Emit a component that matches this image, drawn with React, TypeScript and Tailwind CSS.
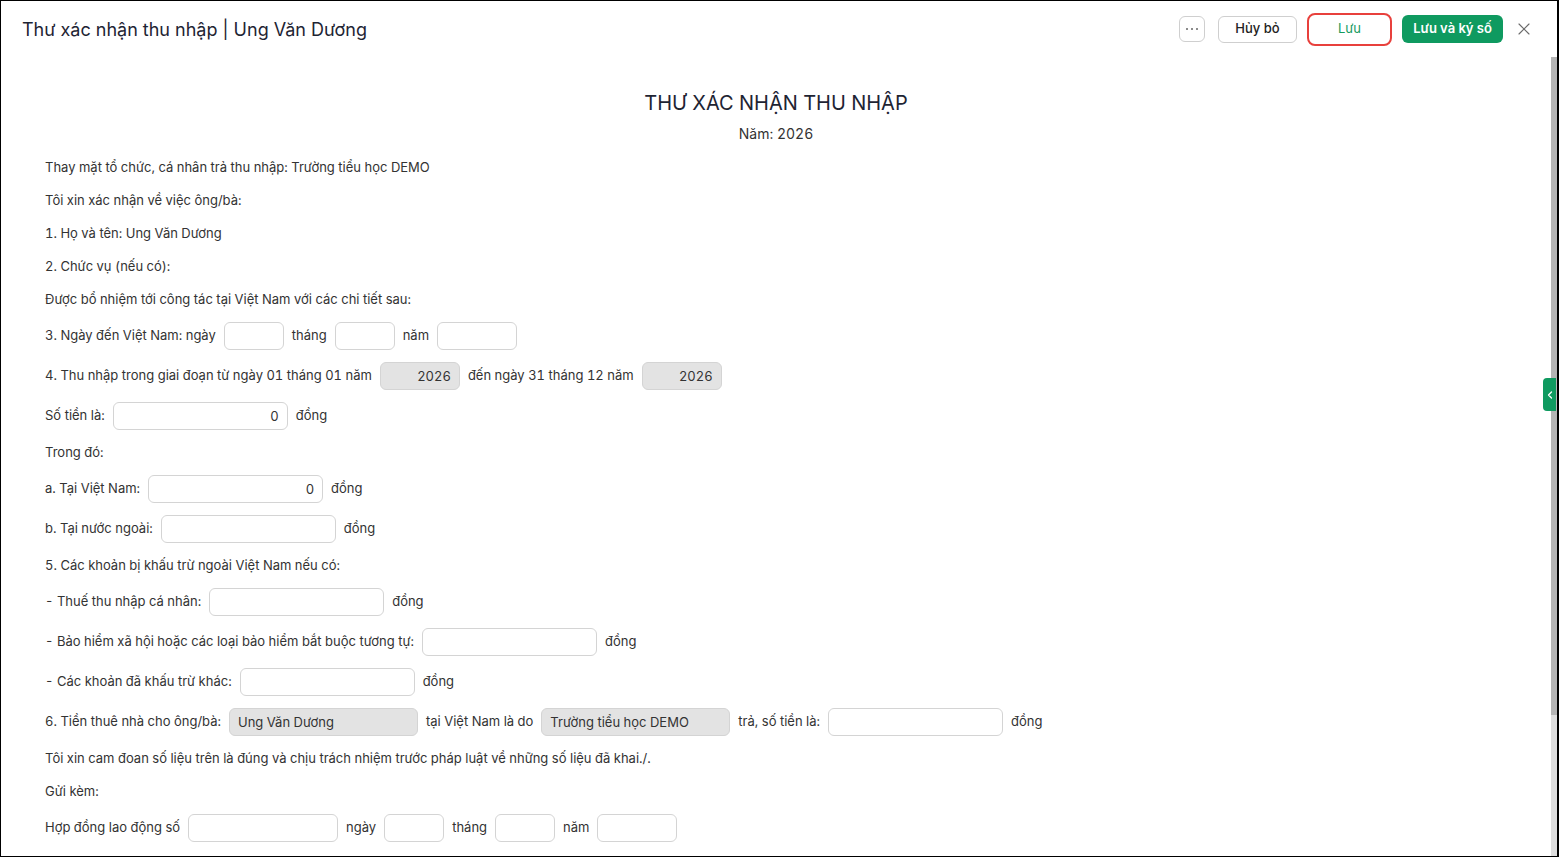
import { ChevronLeft, X } from 'lucide-react'
import type { ReactNode } from 'react'

const inputBase =
  'h-[28px] rounded-[6px] border border-[#d4d4d4] px-2 text-[13px] text-[#333] outline-none'

function Field({
  w,
  value = '',
  align = 'left',
  disabled = false,
}: {
  w: string
  value?: string
  align?: 'left' | 'right'
  disabled?: boolean
}) {
  return (
    <input
      readOnly
      value={value}
      className={`${inputBase} ${w} ${align === 'right' ? 'text-right' : 'text-left'} ${
        disabled ? 'bg-[#e3e3e3] border-[#d0d0d0]' : 'bg-white'
      }`}
    />
  )
}

function Line({ children }: { children: ReactNode }) {
  return <div className="h-[21px] leading-[21px]">{children}</div>
}

function Row({ children }: { children: ReactNode }) {
  return <div className="flex h-[28px] items-center gap-2">{children}</div>
}

export default function App() {
  return (
    <div
      className="relative flex h-[857px] w-[1559px] flex-col overflow-hidden border-t border-b border-l border-r-2 border-black bg-white"
      style={{ fontFamily: 'Inter, "Noto Sans", sans-serif' }}
    >
      {/* Header */}
      <div className="flex h-[56px] shrink-0 items-center pl-[21px] pr-[23px]">
        <h1 className="text-[18px] text-[#1e2433]">Thư xác nhận thu nhập | Ung Văn Dương</h1>
        <div className="ml-auto flex items-center gap-[13px]">
          <button className="flex h-[26px] w-[26px] items-center justify-center gap-[2.5px] rounded-[6px] border border-[#cfcfcf]">
            <span className="h-[2.5px] w-[2.5px] rounded-full bg-[#666]" />
            <span className="h-[2.5px] w-[2.5px] rounded-full bg-[#666]" />
            <span className="h-[2.5px] w-[2.5px] rounded-full bg-[#666]" />
          </button>
          <button className="h-[27px] w-[79px] rounded-[6px] border border-[#cfcfcf] bg-white text-[13px] font-medium text-[#222]">
            Hủy bỏ
          </button>
          <button className="h-[27px] w-[79px] rounded-[5px] bg-white text-[13px] text-[#169a5e] outline-2 outline-offset-1 outline-[#e8403c]">
            Lưu
          </button>
          <button className="h-[28px] w-[101px] rounded-[6px] bg-[#0f9a60] text-[13px] font-semibold text-white">
            Lưu và ký số
          </button>
          <X className="-ml-[2px] h-[20px] w-[20px] text-[#6b6b6b]" strokeWidth={1.4} />
        </div>
      </div>

      {/* Document body with its scrollbar */}
      <div className="flex min-h-0 flex-1">
        <div className="min-w-0 flex-1 overflow-hidden">
          <div className="px-[44px] pt-[32px] text-[13px] tabular-nums text-[#333]">
            <div className="text-center">
              <div className="text-[20px] leading-[28px] text-[#1e2433]">THƯ XÁC NHẬN THU NHẬP</div>
              <div className="mt-[7px] text-[14px] leading-[20px]">Năm: 2026</div>
            </div>

            <div className="mt-[13px] flex flex-col gap-3">
              <Line>Thay mặt tổ chức, cá nhân trả thu nhập: Trường tiểu học DEMO</Line>
              <Line>Tôi xin xác nhận về việc ông/bà:</Line>
              <Line>1. Họ và tên: Ung Văn Dương</Line>
              <Line>2. Chức vụ (nếu có):</Line>
              <Line>Được bổ nhiệm tới công tác tại Việt Nam với các chi tiết sau:</Line>
              <Row>
                <span>3. Ngày đến Việt Nam: ngày</span>
                <Field w="w-[60px]" />
                <span>tháng</span>
                <Field w="w-[60px]" />
                <span>năm</span>
                <Field w="w-[80px]" />
              </Row>
              <Row>
                <span>4. Thu nhập trong giai đoạn từ ngày 01 tháng 01 năm</span>
                <Field w="w-[80px]" value="2026" align="right" disabled />
                <span>đến ngày 31 tháng 12 năm</span>
                <Field w="w-[80px]" value="2026" align="right" disabled />
              </Row>
              <Row>
                <span>Số tiền là:</span>
                <Field w="w-[175px]" value="0" align="right" />
                <span>đồng</span>
              </Row>
              <Line>Trong đó:</Line>
              <Row>
                <span>a. Tại Việt Nam:</span>
                <Field w="w-[175px]" value="0" align="right" />
                <span>đồng</span>
              </Row>
              <Row>
                <span>b. Tại nước ngoài:</span>
                <Field w="w-[175px]" />
                <span>đồng</span>
              </Row>
              <Line>5. Các khoản bị khấu trừ ngoài Việt Nam nếu có:</Line>
              <Row>
                <span>- Thuế thu nhập cá nhân:</span>
                <Field w="w-[175px]" />
                <span>đồng</span>
              </Row>
              <Row>
                <span>- Bảo hiểm xã hội hoặc các loại bảo hiểm bắt buộc tương tự:</span>
                <Field w="w-[175px]" />
                <span>đồng</span>
              </Row>
              <Row>
                <span>- Các khoản đã khấu trừ khác:</span>
                <Field w="w-[175px]" />
                <span>đồng</span>
              </Row>
              <Row>
                <span>6. Tiền thuê nhà cho ông/bà:</span>
                <Field w="w-[189px]" value="Ung Văn Dương" disabled />
                <span>tại Việt Nam là do</span>
                <Field w="w-[189px]" value="Trường tiểu học DEMO" disabled />
                <span>trả, số tiền là:</span>
                <Field w="w-[175px]" />
                <span>đồng</span>
              </Row>
              <Line>Tôi xin cam đoan số liệu trên là đúng và chịu trách nhiệm trước pháp luật về những số liệu đã khai./.</Line>
              <Line>Gửi kèm:</Line>
              <Row>
                <span>Hợp đồng lao động số</span>
                <Field w="w-[150px]" />
                <span>ngày</span>
                <Field w="w-[60px]" />
                <span>tháng</span>
                <Field w="w-[60px]" />
                <span>năm</span>
                <Field w="w-[80px]" />
              </Row>
            </div>
          </div>
        </div>

        {/* Scrollbar */}
        <div className="w-[6px] shrink-0 bg-[#dedede]">
          <div className="h-[658px] bg-[#b4b4b4]" />
        </div>
      </div>

      {/* Collapsed side panel tab */}
      <button className="absolute right-[1px] top-[377px] flex h-[33px] w-[13px] items-center justify-center rounded-l-[4px] bg-[#0f9a60] text-white">
        <ChevronLeft className="h-[12px] w-[12px]" strokeWidth={2.5} />
      </button>
    </div>
  )
}
